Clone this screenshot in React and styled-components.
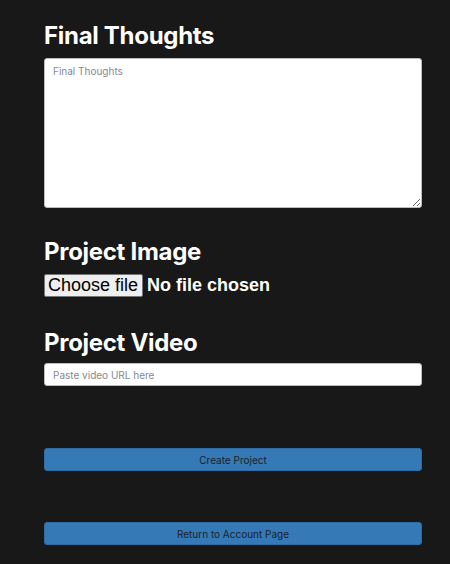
import React from "react";
import styled, { createGlobalStyle } from "styled-components";

const Global = createGlobalStyle`
  html, body { margin: 0; padding: 0; background: #181818; }
  body { font-family: "Inter", "Noto Sans", sans-serif; }
`;

const Page = styled.div`
  min-height: 564px;
  background: #181818;
  padding: 20px 28px 0 44px;
  box-sizing: border-box;
  display: flex;
  flex-direction: column;
`;

const Heading = styled.h2`
  margin: ${(p) => p.$mt || 0}px 0 0 0;
  color: #ffffff;
  font-family: "Inter", "Noto Sans", sans-serif;
  font-weight: 700;
  font-size: 24px;
  line-height: 32px;
  letter-spacing: -0.3px;
`;

const TextArea = styled.textarea`
  margin-top: 6px;
  width: 378px;
  height: 150px;
  box-sizing: border-box;
  border: 1px solid #bdbdbd;
  border-radius: 3px;
  padding: 6px 8px;
  font-family: "Inter", "Noto Sans", sans-serif;
  font-size: 10px;
  background: #fff;
  resize: vertical;
  &::placeholder { color: #858791; }
`;

const FileRow = styled.label`
  margin-top: 6px;
  display: flex;
  align-items: center;
  gap: 4px;
  cursor: pointer;
`;

const HiddenFile = styled.input`
  display: none;
`;

const FileButton = styled.span`
  display: inline-flex;
  align-items: center;
  height: 23px;
  box-sizing: border-box;
  padding: 0 4px 0 3px;
  font-family: "Liberation Sans", Arial, sans-serif;
  font-size: 18px;
  color: #000;
  background: #efefef;
  border: 1px solid #767676;
  border-radius: 2px;
`;

const FileStatus = styled.span`
  font-family: "Liberation Sans", Arial, sans-serif;
  font-weight: 700;
  font-size: 18px;
  color: #fff;
`;

const TextInput = styled.input`
  margin-top: 4px;
  width: 378px;
  height: 23px;
  box-sizing: border-box;
  border: 1px solid #bdbdbd;
  border-radius: 3px;
  padding: 0 8px;
  font-family: "Inter", "Noto Sans", sans-serif;
  font-size: 10px;
  background: #fff;
  &::placeholder { color: #858791; }
`;

const Button = styled.button`
  margin-top: ${(p) => p.$mt}px;
  width: 378px;
  height: 23px;
  box-sizing: border-box;
  background: #3579b6;
  border: 1px solid #2e6da4;
  border-radius: 3px;
  color: #1b1f2a;
  font-family: "Inter", "Noto Sans", sans-serif;
  font-size: 10px;
  cursor: pointer;
`;

export default function App() {
  return (
    <Page>
      <Global />
      <Heading>Final Thoughts</Heading>
      <TextArea placeholder="Final Thoughts" />
      <Heading $mt={28}>Project Image</Heading>
      <FileRow>
        <HiddenFile type="file" />
        <FileButton>Choose file</FileButton>
        <FileStatus>No file chosen</FileStatus>
      </FileRow>
      <Heading $mt={30}>Project Video</Heading>
      <TextInput type="text" placeholder="Paste video URL here" />
      <Button $mt={62}>Create Project</Button>
      <Button $mt={51}>Return to Account Page</Button>
    </Page>
  );
}
